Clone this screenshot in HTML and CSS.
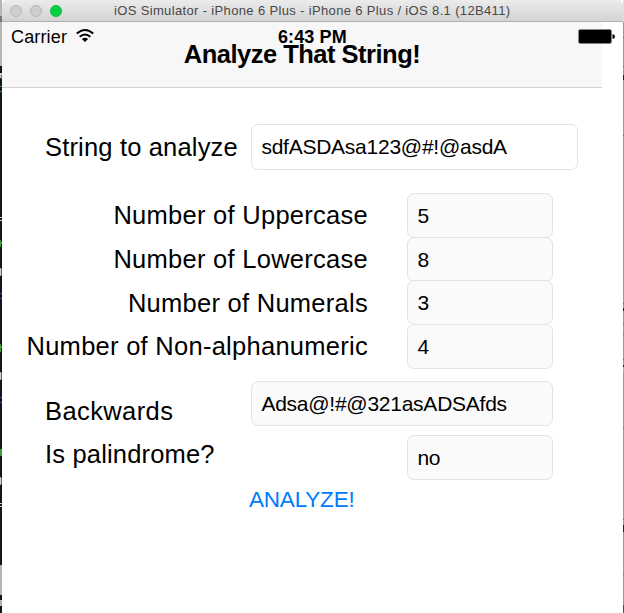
FILE: index.html
```
<!DOCTYPE html>
<html lang="en">
<head>
<meta charset="utf-8">
<title>Analyze That String!</title>
<link rel="stylesheet" href="styles.css">
</head>
<body>
<div class="desktop">
  <svg class="edge edge-left" width="2" height="613" shape-rendering="crispEdges">
    <path fill="#b5b5b5" d="M0 0h2v66H0z"/><path fill="#777" d="M0 16h2v6H0z"/>
    <path fill="#12151f" d="M0 66h2v547H0z"/>
    <path fill="#ccc" d="M0 73h2v5H0zM0 217h2v1H0zM0 220h2v1H0zM0 268h1v8H0zM0 372h1v8H0zM0 477h1v8H0zM0 503h2v1H0zM0 506h2v1H0z"/>
    <path fill="#b5532c" d="M1 75h1v4H1zM1 269h1v6H1zM1 373h1v6H1zM1 478h1v6H1z"/>
    <path fill="#3c9c32" d="M0 86h2v1H0zM0 91h2v1H0zM0 240h1v7H0zM1 242h1v2H1zM0 344h1v8H0zM1 346h1v2H1zM0 449h2v7H0z"/>
    <path fill="#4a43a5" d="M0 293h2v1H0zM0 298h2v1H0zM0 397h2v1H0zM0 402h2v1H0z"/>
    <path fill="#b4b4b4" d="M0 565h2v30H0zM0 600h2v6H0z"/>
  </svg>
  <main class="window">
    <header class="titlebar">
      <div class="lights"><i></i><i></i><i class="zoom"></i></div>
      <span class="window-title">iOS Simulator - iPhone 6 Plus - iPhone 6 Plus / iOS 8.1 (12B411)</span>
    </header>
    <div class="navbar">
      <div class="status">
        <span class="carrier">Carrier</span>
        <svg class="wifi" width="18" height="13" viewBox="0 0 18 13" fill="none" stroke="#000" stroke-width="2">
          <path d="M.8 4.6Q9-2.5 17.2 4.6"/><path d="M3.7 7.8Q9 3.2 14.3 7.8"/><path fill="#000" stroke="none" d="M5.9 10Q9 7.5 12.1 10L9 13z"/>
        </svg>
        <span class="clock">6:43 PM</span>
        <svg class="battery" width="37" height="15" viewBox="0 0 37 15">
          <rect x=".5" y=".5" width="33" height="14" rx="1.8" fill="#000" stroke="#858585"/><path d="M34.5 5Q37 5.5 37 7.5T34.5 10z"/>
        </svg>
      </div>
      <h1 class="title">Analyze That String!</h1>
    </div>
    <form class="form">
      <div class="row source"><label class="lead">String to analyze</label><div class="field"><span>sdfASDAsa123@#!@asdA</span></div></div>
      <div class="counts">
        <div class="row count"><label class="upper">Number of Uppercase</label><div class="field">5</div></div>
        <div class="row count"><label class="lower">Number of Lowercase</label><div class="field">8</div></div>
        <div class="row count"><label class="nums">Number of Numerals</label><div class="field">3</div></div>
        <div class="row count"><label class="non">Number of Non-alphanumeric</label><div class="field">4</div></div>
      </div>
      <div class="row backwards"><label class="lead">Backwards</label><div class="field"><span>Adsa@!#@321asADSAfds</span></div></div>
      <div class="row palindrome"><label class="lead">Is palindrome?</label><div class="field">no</div></div>
      <button class="analyze" type="button">ANALYZE!</button>
    </form>
  </main>
  <svg class="edge edge-right" width="1" height="613" shape-rendering="crispEdges">
    <path fill="#999" d="M0 0h1v613H0z"/><path fill="#ddd" d="M0 0h1v22H0z"/>
    <path fill="#222" d="M0 75h1v5H0zM0 308h1v3H0zM0 365h1v2H0zM0 525h1v7H0z"/>
    <path fill="#666" d="M0 37h1v1H0zM0 66h1v1H0zM0 135h1v1H0zM0 303h1v1H0zM0 323h1v1H0zM0 334h1v1H0zM0 359h1v1H0zM0 427h1v1H0zM0 519h1v1H0zM0 574h1v1H0z"/>
    <path fill="#8dc0cc" d="M0 367h1v5H0z"/><path fill="#2454a6" d="M0 605h1v8H0z"/>
  </svg>
</div>
</body>
</html>
```
FILE: styles.css
```
* { box-sizing: border-box; }
body { margin: 0; overflow: hidden; background: #fff; color: #000; font-family: "Liberation Sans", Arial, sans-serif; }
.desktop { display: flex; width: 624px; height: 613px; }
.edge { flex: none; display: block; }
.window { width: 621px; height: 613px; background: #fff; }
.titlebar { display: flex; align-items: center; height: 22px; background: linear-gradient(#ebebeb, #d3d3d3); border-bottom: 1px solid #b1b1b1; border-radius: 5px 5px 0 0; }
.lights { display: flex; gap: 8px; margin-left: 8px; width: 104px; }
.lights i { width: 12px; height: 12px; border-radius: 50%; background: #cecece; border: 1px solid #b6b6b6; }
.lights .zoom { background: #05d143; border-color: #12bd3b; }
.window-title { font-size: 13px; line-height: 20px; letter-spacing: .35px; color: #484848; white-space: nowrap; padding-top: 1px; }
.navbar { width: 600px; height: 66px; background: #f7f7f7; border-bottom: 1px solid #d1d1d1; }
.status { display: flex; width: 613px; height: 30px; padding: 6px 0 0 9px; }
.carrier { width: 65px; font-size: 18px; line-height: 18px; letter-spacing: .15px; }
.wifi { margin-top: 1px; }
.clock { margin-left: 184px; width: 116px; font-size: 18px; line-height: 18px; font-weight: bold; letter-spacing: .1px; white-space: nowrap; }
.battery { margin-left: auto; margin-top: 1px; flex: none; }
.title { margin: -12px 0 0; font-size: 25.5px; line-height: 29px; letter-spacing: -.5px; text-align: center; white-space: nowrap; }
.form { padding-top: 36px; }
.row { display: flex; }
label { flex: none; font-size: 25.5px; line-height: 30px; letter-spacing: .27px; white-space: nowrap; }
.field { flex: none; width: 146px; height: 45px; padding: 0 9.4px; border: 1px solid #e3e3e3; border-radius: 7px; background: #fafafa; font-size: 21px; line-height: 43px; letter-spacing: -.25px; }
.lead { width: 206px; margin-left: 43px; padding-top: 8px; letter-spacing: .17px; }
.source .field { width: 327px; height: 46px; background: #fff; }
.counts { padding-top: 23px; }
.count { height: 43.6px; gap: 39px; }
.count label { width: 366px; padding-top: 7.4px; text-align: right; }
.backwards { padding-top: 14px; height: 68px; }
.backwards .lead { padding-top: 15px; letter-spacing: .4px; }
.backwards .field { width: 302px; }
.palindrome .lead { width: 362px; padding-top: 4px; }
.analyze { display: block; margin: 7px 0 0 247px; padding: 0; border: 0; background: none; font: 22.5px/26px "Liberation Sans", Arial, sans-serif; letter-spacing: -.2px; color: #007aff; }
```
